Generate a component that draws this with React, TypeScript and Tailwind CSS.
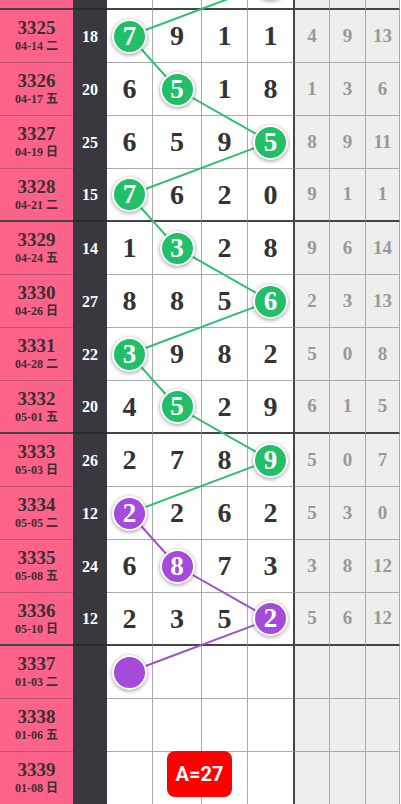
import React from 'react'

type Row = {
  no: string
  date: string
  sum: string
  nums: (number | null)[]
  ball: number
  color: 'g' | 'p'
  gray: (number | null)[]
}

// first row is only the tail of the previous period, scrolled out of view
const ROWS: Row[] = [
  { no: '', date: '', sum: '', nums: [null, null, null, null], ball: 3, color: 'g', gray: [null, null, null] },
  { no: '3325', date: '04-14 二', sum: '18', nums: [7, 9, 1, 1], ball: 0, color: 'g', gray: [4, 9, 13] },
  { no: '3326', date: '04-17 五', sum: '20', nums: [6, 5, 1, 8], ball: 1, color: 'g', gray: [1, 3, 6] },
  { no: '3327', date: '04-19 日', sum: '25', nums: [6, 5, 9, 5], ball: 3, color: 'g', gray: [8, 9, 11] },
  { no: '3328', date: '04-21 二', sum: '15', nums: [7, 6, 2, 0], ball: 0, color: 'g', gray: [9, 1, 1] },
  { no: '3329', date: '04-24 五', sum: '14', nums: [1, 3, 2, 8], ball: 1, color: 'g', gray: [9, 6, 14] },
  { no: '3330', date: '04-26 日', sum: '27', nums: [8, 8, 5, 6], ball: 3, color: 'g', gray: [2, 3, 13] },
  { no: '3331', date: '04-28 二', sum: '22', nums: [3, 9, 8, 2], ball: 0, color: 'g', gray: [5, 0, 8] },
  { no: '3332', date: '05-01 五', sum: '20', nums: [4, 5, 2, 9], ball: 1, color: 'g', gray: [6, 1, 5] },
  { no: '3333', date: '05-03 日', sum: '26', nums: [2, 7, 8, 9], ball: 3, color: 'g', gray: [5, 0, 7] },
  { no: '3334', date: '05-05 二', sum: '12', nums: [2, 2, 6, 2], ball: 0, color: 'p', gray: [5, 3, 0] },
  { no: '3335', date: '05-08 五', sum: '24', nums: [6, 8, 7, 3], ball: 1, color: 'p', gray: [3, 8, 12] },
  { no: '3336', date: '05-10 日', sum: '12', nums: [2, 3, 5, 2], ball: 3, color: 'p', gray: [5, 6, 12] },
  { no: '3337', date: '01-03 二', sum: '', nums: [null, null, null, null], ball: 0, color: 'p', gray: [null, null, null] },
  { no: '3338', date: '01-06 五', sum: '', nums: [null, null, null, null], ball: -1, color: 'p', gray: [null, null, null] },
  { no: '3339', date: '01-08 日', sum: '', nums: [null, null, null, null], ball: -1, color: 'p', gray: [null, null, null] },
]

const COL_X = [129.5, 177, 224.5, 270.5]
const NUM_W = ['w-[46px] border-r border-r-[#aaa]', 'w-[49px] border-r border-r-[#aaa]', 'w-[46px] border-r border-r-[#aaa]', 'w-[47px] border-r-2 border-r-[#444]']
const GRAY_W = ['w-[35px]', 'w-[36px]', 'w-[34px]']

const serif = { fontFamily: '"Liberation Serif", "Noto Sans CJK SC", serif' }

function centerY(i: number) {
  return i * 53 + 26
}

function Ball({ value, color }: { value: number | null; color: 'g' | 'p' }) {
  return (
    <div
      className={`relative z-10 flex h-[35px] w-[35px] items-center justify-center rounded-full border-2 border-white text-[27px] font-bold leading-none text-white shadow-[0_1px_4px_rgba(0,0,0,0.4)] ${
        color === 'g' ? 'bg-[#22bf68]' : 'bg-[#a44cd9]'
      }`}
    >
      {value}
    </div>
  )
}

function TableRow({ row, thick }: { row: Row; thick: boolean }) {
  const b = thick ? 'border-b-2 border-b-[#444]' : 'border-b border-b-[#aaa]'
  return (
    <div className="flex h-[53px]">
      <div
        className={`flex w-[73px] shrink-0 flex-col items-center justify-center bg-[#fd6389] text-[#3a2f33] ${
          thick ? 'border-b-2 border-b-[#444]' : 'border-b border-b-[#c0506f]'
        }`}
      >
        <span className="text-[19px] font-bold leading-[20px]">{row.no}</span>
        <span className="text-[12px] font-bold leading-[16px] whitespace-pre">{row.date}</span>
      </div>
      <div
        className={`flex w-[34px] shrink-0 items-center justify-center bg-[#39383e] text-[16px] font-bold text-white ${
          thick ? 'border-b-2 border-b-[#2c2c30]' : ''
        }`}
      >
        {row.sum}
      </div>
      {row.nums.map((n, c) => (
        <div key={c} className={`flex shrink-0 items-center justify-center bg-white text-[28px] font-bold text-[#333] ${NUM_W[c]} ${b}`}>
          {row.ball === c ? <Ball value={n} color={row.color} /> : n}
        </div>
      ))}
      {row.gray.map((g, c) => (
        <div key={c} className={`flex shrink-0 items-center justify-center border-r border-r-[#aaa] bg-[#eee] text-[19px] font-bold text-[#999] ${GRAY_W[c]} ${b}`}>
          {g}
        </div>
      ))}
    </div>
  )
}

export default function App() {
  const pts = ROWS.map((r, i) => (r.ball >= 0 ? `${COL_X[r.ball]},${centerY(i)}` : ''))
  const green = pts.slice(0, 11).join(' ')
  const purple = pts.slice(10, 14).join(' ')

  return (
    <div className="h-[804px] w-[401px] overflow-hidden bg-white" style={serif}>
      <div className="relative -mt-[43px]">
        {ROWS.map((r, i) => (
          <TableRow key={i} row={r} thick={i % 4 === 0} />
        ))}
        <svg className="pointer-events-none absolute left-0 top-0" width={401} height={ROWS.length * 53}>
          <polyline points={green} fill="none" stroke="#2ec070" strokeWidth={2} />
          <polyline points={purple} fill="none" stroke="#9a4fd1" strokeWidth={2} />
        </svg>
        <div
          className="absolute left-[167px] top-[794px] z-20 flex h-[46px] w-[65px] items-center justify-center rounded-lg bg-[#ff0000] text-[20px] font-bold text-white"
          style={{ fontFamily: 'Roboto, "Liberation Sans", sans-serif' }}
        >
          A=27
        </div>
      </div>
    </div>
  )
}
